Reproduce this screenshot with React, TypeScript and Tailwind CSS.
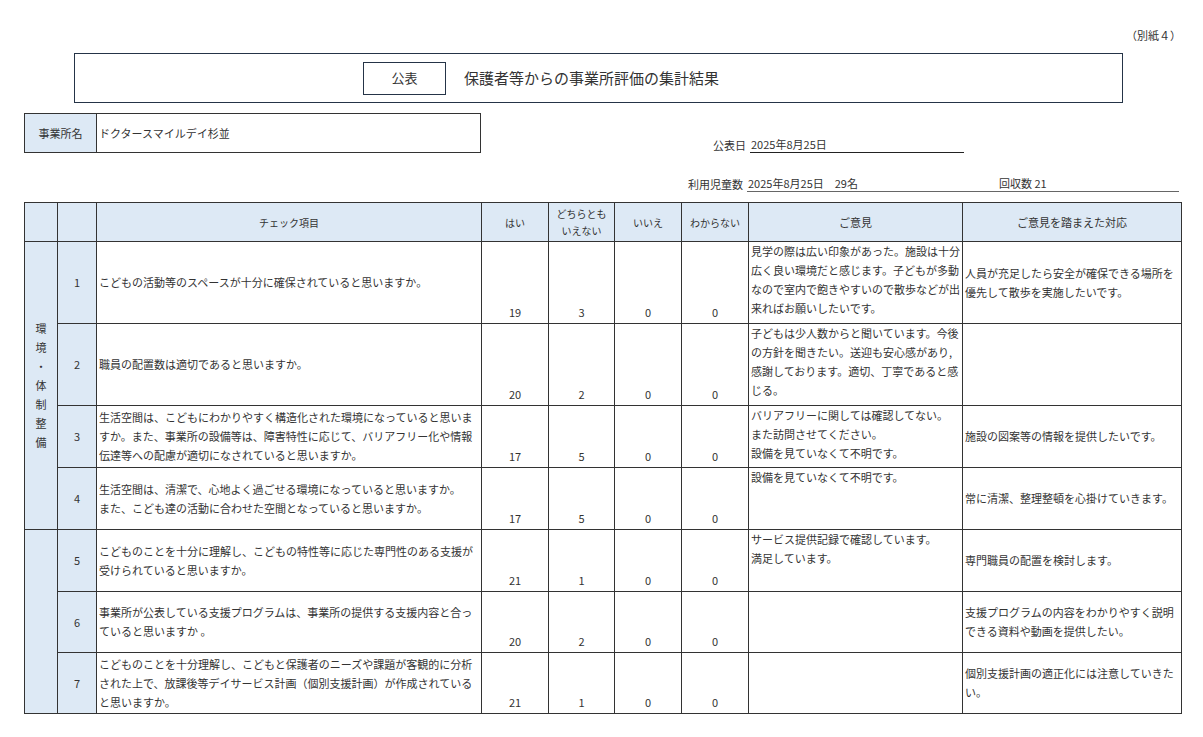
import React from "react";

const rows = [
  { n: 1, q: "こどもの活動等のスペースが十分に確保されていると思いますか。", v: [19, 3, 0, 0], o: "見学の際は広い印象があった。施設は十分広く良い環境だと感じます。子どもが多動なので室内で飽きやすいので散歩などが出来ればお願いしたいです。", r: "人員が充足したら安全が確保できる場所を優先して散歩を実施したいです。", h: 82 },
  { n: 2, q: "職員の配置数は適切であると思いますか。", v: [20, 2, 0, 0], o: "子どもは少人数からと聞いています。今後の方針を聞きたい。送迎も安心感があり,感謝しております。適切、丁寧であると感じる。", r: "", h: 82 },
  { n: 3, q: "生活空間は、こどもにわかりやすく構造化された環境になっていると思いますか。また、事業所の設備等は、障害特性に応じて、バリアフリー化や情報伝達等への配慮が適切になされていると思いますか。", v: [17, 5, 0, 0], o: "バリアフリーに関しては確認してない。\nまた訪問させてください。\n設備を見ていなくて不明です。", r: "施設の図案等の情報を提供したいです。", h: 62 },
  { n: 4, q: "生活空間は、清潔で、心地よく過ごせる環境になっていると思いますか。\nまた、こども達の活動に合わせた空間となっていると思いますか。", v: [17, 5, 0, 0], o: "設備を見ていなくて不明です。", r: "常に清潔、整理整頓を心掛けていきます。", h: 62 },
  { n: 5, q: "こどものことを十分に理解し、こどもの特性等に応じた専門性のある支援が受けられていると思いますか。", v: [21, 1, 0, 0], o: "サービス提供記録で確認しています。\n満足しています。", r: "専門職員の配置を検討します。", h: 62 },
  { n: 6, q: "事業所が公表している支援プログラムは、事業所の提供する支援内容と合っていると思いますか 。", v: [20, 2, 0, 0], o: "", r: "支援プログラムの内容をわかりやすく説明できる資料や動画を提供したい。", h: 61 },
  { n: 7, q: "こどものことを十分理解し、こどもと保護者のニーズや課題が客観的に分析された上で、放課後等デイサービス計画（個別支援計画）が作成されていると思いますか。", v: [21, 1, 0, 0], o: "", r: "個別支援計画の適正化には注意していきたい。", h: 61 },
];

const bd = "border border-[#333]";

export default function App() {
  return (
    <div className="w-[1203px] h-[737px] bg-white overflow-hidden text-[#333] relative" style={{ fontFamily: '"Noto Sans CJK JP", sans-serif' }}>
      <div className="text-[11px] text-right pr-[22px] pt-[27px] h-[53px]">（別紙４）</div>
      <div className="ml-[74px] w-[1049px] h-[50px] border border-[#253447] flex items-center">
        <div className="ml-[288px] w-[83px] h-[33px] border border-[#253447] flex items-center justify-center text-[13px]">公表</div>
        <div className="ml-[18px] text-[15px]">保護者等からの事業所評価の集計結果</div>
      </div>
      <div className="flex mt-[10px]">
        <div className="ml-[24px] w-[457px] h-[40px] border border-[#333] flex text-[11px]">
          <div className="w-[72px] bg-[#dde9f5] border-r border-[#333] flex items-center justify-center">事業所名</div>
          <div className="flex items-center pl-[2px]">ドクタースマイルデイ杉並</div>
        </div>
        <div className="ml-[232px] mt-[21px] flex text-[11px] items-end h-[19px]">
          <span className="mr-[4px]">公表日</span>
          <span className="w-[214px] border-b border-[#222] pl-[1px]">2025年8月25日</span>
        </div>
      </div>
      <div className="flex text-[11px] mt-[20px] ml-[688px] h-[19px] items-end">
        <span className="mr-[4px]">利用児童数</span>
        <div className="w-[432px] border-b border-[#666] flex">
          <span className="w-[252px] pl-[1px]">2025年8月25日　29名</span>
          <span>回収数 21</span>
        </div>
      </div>
      <table className="ml-[24px] mt-[10px] border-collapse text-[11px] leading-[19px] table-fixed" style={{ width: 1157 }}>
        <colgroup>
          <col style={{ width: 33 }} /><col style={{ width: 39 }} /><col style={{ width: 385 }} />
          <col style={{ width: 67 }} /><col style={{ width: 66 }} /><col style={{ width: 67 }} /><col style={{ width: 67 }} />
          <col style={{ width: 214 }} /><col style={{ width: 219 }} />
        </colgroup>
        <thead>
          <tr className="h-[39px] bg-[#dde9f5] text-center text-[10px]">
            <th className={bd}></th><th className={bd}></th>
            <th className={`${bd} font-normal`}>チェック項目</th>
            <th className={`${bd} font-normal`}>はい</th>
            <th className={`${bd} font-normal leading-[17px]`}>どちらとも<br />いえない</th>
            <th className={`${bd} font-normal`}>いいえ</th>
            <th className={`${bd} font-normal`}>わからない</th>
            <th className={`${bd} font-normal text-[11px]`}>ご意見</th>
            <th className={`${bd} font-normal text-[11px]`}>ご意見を踏まえた対応</th>
          </tr>
        </thead>
        <tbody>
          {rows.map((r, i) => (
            <tr key={r.n} style={{ height: r.h }}>
              {i === 0 && (
                <td rowSpan={4} className={`${bd} bg-[#dde9f5] text-center align-middle text-[11px]`}>
                  <div className="flex flex-col items-center leading-[19px]">
                    {"環境・体制整備".split("").map((c, k) => <span key={k}>{c}</span>)}
                  </div>
                </td>
              )}
              {i === 4 && <td rowSpan={3} className={`${bd} bg-[#dde9f5]`}></td>}
              <td className={`${bd} bg-[#dde9f5] text-center`}>{r.n}</td>
              <td className={`${bd} px-[2px] whitespace-pre-line`}>{r.q}</td>
              {r.v.map((v, k) => (
                <td key={k} className={`${bd} text-center align-bottom pb-[1px]`}>{v}</td>
              ))}
              <td className={`${bd} px-[2px] whitespace-pre-line align-top`}>{r.o}</td>
              <td className={`${bd} px-[2px] align-middle`}>{r.r}</td>
            </tr>
          ))}
        </tbody>
      </table>
    </div>
  );
}
